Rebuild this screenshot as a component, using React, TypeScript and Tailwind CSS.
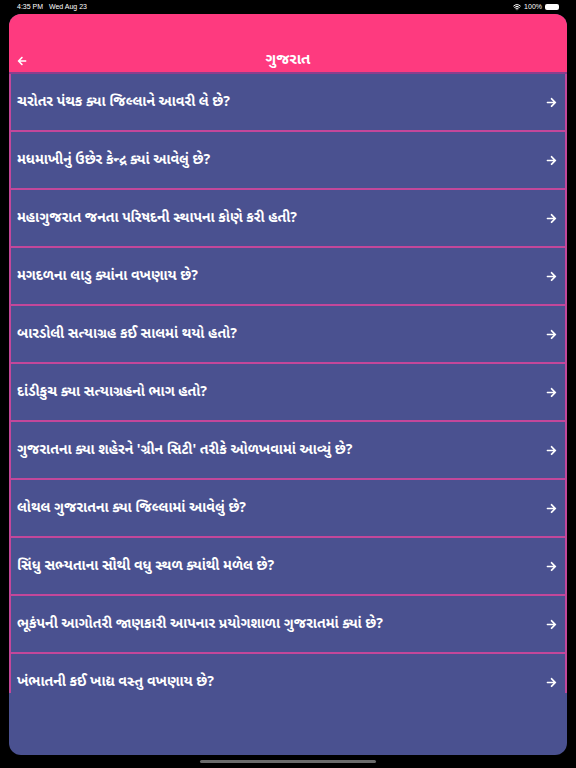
import { Wifi } from "lucide-react";
import { FaArrowLeft, FaArrowRight } from "react-icons/fa";

const questions = [
  "ચરોતર પંથક ક્યા જિલ્લાને આવરી લે છે?",
  "મધમાખીનું ઉછેર કેન્દ્ર ક્યાં આવેલું છે?",
  "મહાગુજરાત જનતા પરિષદની સ્થાપના કોણે કરી હતી?",
  "મગદળના લાડુ ક્યાંના વખણાય છે?",
  "બારડોલી સત્યાગ્રહ કઈ સાલમાં થયો હતો?",
  "દાંડીકુચ ક્યા સત્યાગ્રહનો ભાગ હતો?",
  "ગુજરાતના ક્યા શહેરને 'ગ્રીન સિટી' તરીકે ઓળખવામાં આવ્યું છે?",
  "લોથલ ગુજરાતના ક્યા જિલ્લામાં આવેલું છે?",
  "સિંધુ સભ્યતાના સૌથી વધુ સ્થળ ક્યાંથી મળેલ છે?",
  "ભૂકંપની આગોતરી જાણકારી આપનાર પ્રયોગશાળા ગુજરાતમાં ક્યાં છે?",
  "ખંભાતની કઈ ખાદ્ય વસ્તુ વખણાય છે?",
];

function StatusBar() {
  return (
    <div className="h-[14px] flex items-center justify-between px-[17px] text-white text-[7px] font-['Liberation_Sans',sans-serif]">
      <span>4:35 PM&nbsp;&nbsp;&nbsp;Wed Aug 23</span>
      <div className="flex items-center gap-[3px]">
        <Wifi size={8} strokeWidth={3} />
        <span>100%</span>
        <div className="w-[14px] h-[6px] rounded-[2px] bg-white" />
      </div>
    </div>
  );
}

export default function App() {
  return (
    <div className="w-[576px] h-[768px] bg-black flex flex-col font-['Noto_Sans_Gujarati','Noto_Sans',sans-serif]">
      <StatusBar />
      <div className="mx-[9px] h-[741px] rounded-[12px] overflow-hidden bg-[#4a5190] flex flex-col">
        <header className="h-[58px] bg-[#fe3a7f] flex items-end shrink-0">
          <div className="h-[22px] w-full flex items-center relative px-[8px]">
            <FaArrowLeft size={10} className="text-white" />
            <h1 className="absolute inset-x-0 text-center text-white text-[15px] font-bold">ગુજરાત</h1>
          </div>
        </header>
        <div className="h-[2px] bg-[#8a3f8e] shrink-0" />
        <ul className="h-[619px] overflow-hidden shrink-0">
          {questions.map((q) => (
            <li
              key={q}
              className="h-[58px] border-x-2 border-b-2 border-[#c3479a] flex items-center justify-between pl-[6px] pr-[8px]"
            >
              <span className="text-white text-[14px] font-bold">{q}</span>
              <FaArrowRight size={11} className="text-white" />
            </li>
          ))}
        </ul>
      </div>
      <div className="flex-1 flex items-center justify-center">
        <div className="w-[176px] h-[3px] rounded-full bg-[#6b6b6b]" />
      </div>
    </div>
  );
}
